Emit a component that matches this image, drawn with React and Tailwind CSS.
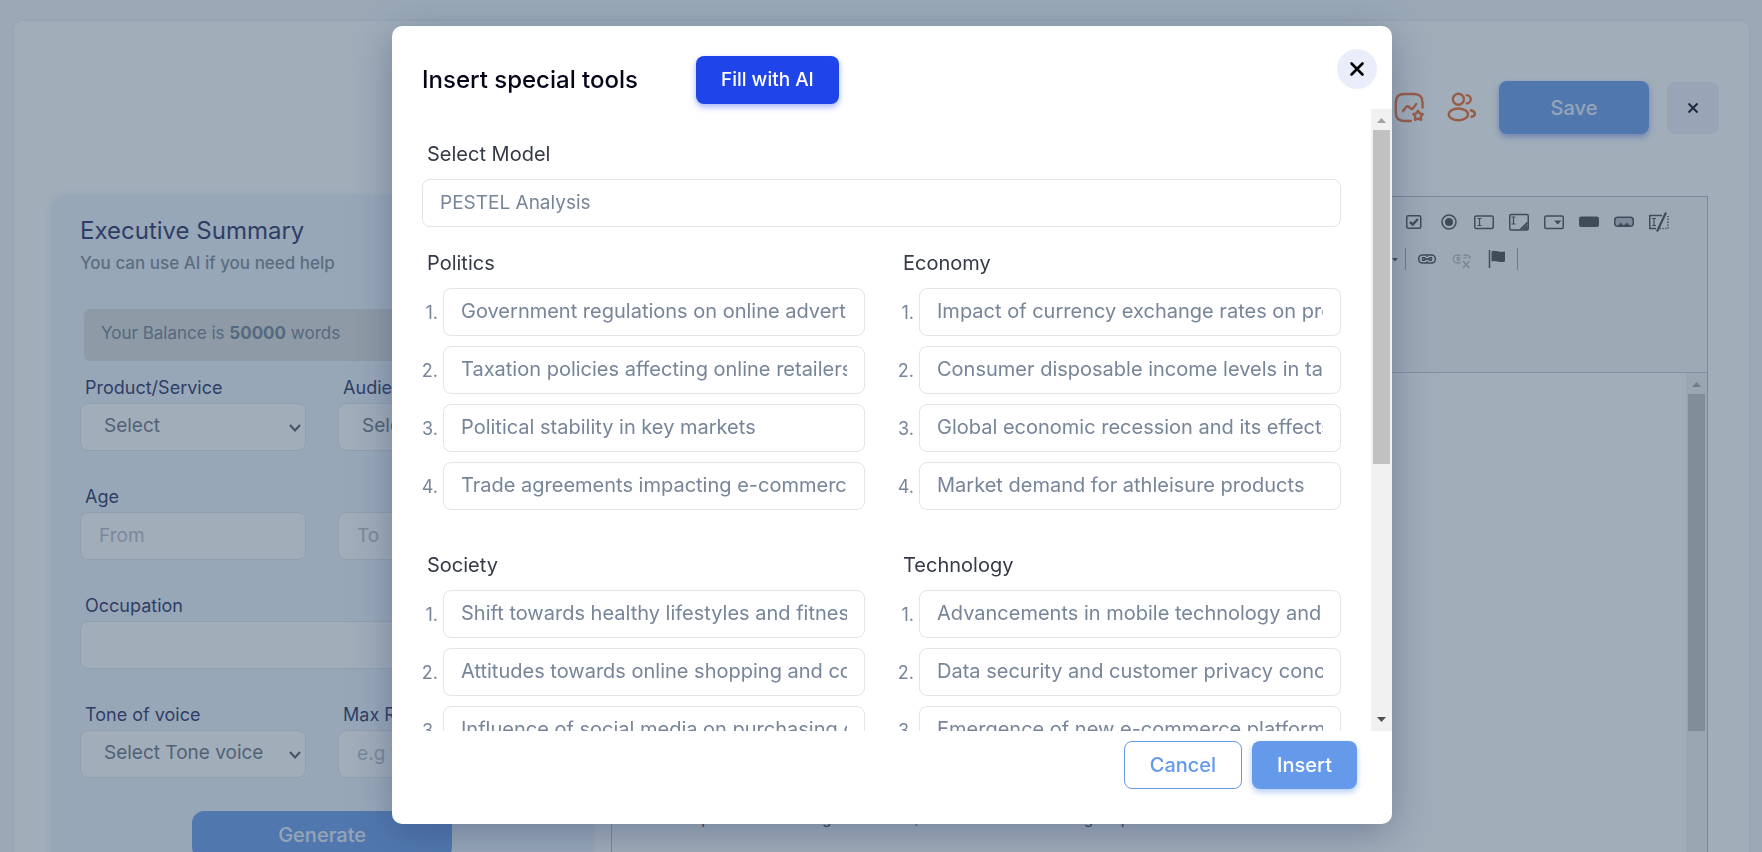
import { useId } from 'react';

const sections = [
  {
    title: 'Politics',
    items: [
      'Government regulations on online advertising',
      'Taxation policies affecting online retailers',
      'Political stability in key markets',
      'Trade agreements impacting e-commerce',
    ],
  },
  {
    title: 'Economy',
    items: [
      'Impact of currency exchange rates on profits',
      'Consumer disposable income levels in target markets',
      'Global economic recession and its effects on sales',
      'Market demand for athleisure products',
    ],
  },
  {
    title: 'Society',
    items: [
      'Shift towards healthy lifestyles and fitness',
      'Attitudes towards online shopping and convenience',
      'Influence of social media on purchasing decisions',
      'Changing demographics of shoppers',
    ],
  },
  {
    title: 'Technology',
    items: [
      'Advancements in mobile technology and apps',
      'Data security and customer privacy concerns',
      'Emergence of new e-commerce platforms',
      'Automation in logistics',
    ],
  },
];

const fieldBase =
  'block h-12 w-full min-w-0 rounded-lg border border-[#e2e4e8] bg-white pb-0.5 leading-6 outline-none';

function TextField({ label, name, placeholder }) {
  const id = useId();
  return (
    <div>
      <label htmlFor={id} className="block h-[30px] pl-[5px] text-[18px] leading-[30px] text-[#252a5e]">
        {label}
      </label>
      <input
        id={id}
        type="text"
        aria-label={name}
        placeholder={placeholder}
        className={`${fieldBase} px-[18px] text-[19px] placeholder:text-[#b4bac4]`}
      />
    </div>
  );
}

function SelectField({ label, option }) {
  const id = useId();
  return (
    <div>
      <label htmlFor={id} className="block h-[30px] pl-[5px] text-[18px] leading-[30px] text-[#252a5e]">
        {label}
      </label>
      <div className="relative">
        <select id={id} className={`${fieldBase} appearance-none pr-7 pl-[23px] text-[19px] text-[#66707f]`}>
          <option>{option}</option>
        </select>
        <svg className="pointer-events-none absolute top-[19px] right-[5px] size-3" viewBox="0 0 12 12" fill="none" stroke="#4a4f5c" strokeWidth="2">
          <path d="M1 3l5 5.5L11 3" />
        </svg>
      </div>
    </div>
  );
}

function ChartStarIcon() {
  return (
    <svg className="size-[33px]" viewBox="0 0 24 24" fill="none" stroke="#ee6526" strokeWidth="1.7" strokeLinecap="round" strokeLinejoin="round">
      <path d="M21.500 12V8.500c0-4.200-2-6.300-6.200-6.300H8.300C4.100 2.200 2 4.300 2 8.500v7c0 4.200 2.100 6.300 6.300 6.300h4.700" />
      <path d="M7.300 14.600l2.400-3.100c.4-.5 1-.6 1.500-.2l1.900 1.500c.5.4 1.100.3 1.500-.2l2.300-3.100" />
      <path d="M18.200 14.300l1.200 2 2.300.5-1.500 1.800.2 2.400-2.200-.9-2.200.9.2-2.400-1.500-1.800 2.300-.5z" />
    </svg>
  );
}

function UsersIcon() {
  return (
    <svg className="size-[33px]" viewBox="0 0 24 24" fill="none" stroke="#ee6526" strokeWidth="1.7" strokeLinecap="round">
      <circle cx="9" cy="6" r="4" />
      <path d="M15 9a3 3 0 0 0 0-6" />
      <ellipse cx="9" cy="17" rx="7" ry="4.300" />
      <path d="M18 14c1.754.385 3 1.359 3 2.500 0 1.029-1.014 1.923-2.500 2.370" />
    </svg>
  );
}

const ibeam = (x, y) => `M${x} ${y}h4M${x + 2} ${y}v7M${x} ${y + 7}h4`;

const toolbarTop = [
  {
    name: 'Checkbox',
    art: (
      <>
        <rect x="2.750" y="3.750" width="14" height="12.500" rx="1.500" />
        <path d="M6 10l2.800 2.600L13.800 7" strokeWidth="2.400" />
      </>
    ),
  },
  {
    name: 'Radio Button',
    art: (
      <>
        <circle cx="10" cy="10" r="7" />
        <circle cx="10" cy="10" r="4" fill="#464646" stroke="none" />
      </>
    ),
  },
  {
    name: 'Text Field',
    art: (
      <>
        <rect x=".75" y="4" width="18.500" height="12.500" rx="1.500" />
        <path d={ibeam(3.5, 6.5)} strokeWidth="1.200" />
      </>
    ),
  },
  {
    name: 'Textarea',
    art: (
      <>
        <rect x=".75" y="2.500" width="18.500" height="15.500" rx="1.500" />
        <path d={ibeam(2.5, 5)} strokeWidth="1.200" />
        <path d="M18.500 10.500l-7 7M18.500 13.500l-4 4M18.500 16l-1.500 1.500" strokeWidth="1.800" />
      </>
    ),
  },
  {
    name: 'Selection Field',
    art: (
      <>
        <rect x=".75" y="4" width="18.500" height="12.500" rx="1.500" />
        <path d="M10 8.500h7.500L13.750 12.500z" fill="#464646" stroke="none" />
      </>
    ),
  },
  {
    name: 'Button',
    art: <rect x=".75" y="5.250" width="18.500" height="9" rx="1.500" fill="#464646" />,
  },
  {
    name: 'Image Button',
    art: (
      <>
        <rect x=".75" y="5.250" width="18.500" height="9" rx="3" fill="#b9bdc3" />
        <path d="M3.500 14.500l3.200-4 3 3.300 3.200-3.300 3.600 4z" fill="#464646" stroke="none" />
      </>
    ),
  },
  {
    name: 'Hidden Field',
    art: (
      <>
        <path d="M13 3.500H.75v13H7" />
        <path d="M19 4v12.500h-9" strokeDasharray="1.300 1.500" />
        <path d={ibeam(3, 6.5)} strokeWidth="1.200" />
        <path d="M17 .5L8 19.500" strokeWidth="2.200" />
      </>
    ),
  },
];

const toolbarLinks = [
  {
    name: 'Link',
    art: (
      <>
        <rect x="1.750" y="6" width="16.500" height="8" rx="3.500" />
        <path d="M8.200 8.750H5.500v2.500h2.700M11.800 8.750h2.700v2.500h-2.700M10 6v2M10 12v2" strokeWidth="1.300" />
        <path d="M7 10h6" strokeWidth="1.800" />
      </>
    ),
  },
  {
    name: 'Unlink',
    faded: true,
    art: (
      <>
        <path d="M8.500 6.250H5a3.500 3.500 0 0 0 0 7.500h3.500M11.500 6.250H15a3.500 3.500 0 0 1 3 3.500M8.500 8.750h-3v2.500h3M11.500 8.750h3" strokeWidth="1.400" />
        <path d="M11 12l6.500 7M17.500 12L11 19" strokeWidth="1.800" />
      </>
    ),
  },
  {
    name: 'Anchor',
    art: (
      <>
        <path d="M2.500 1v18" strokeWidth="1.500" />
        <path d="M4.500 2.500c4-2.500 6.500 1.500 13.500 0v10c-6 2-9-2-13.500 0z" fill="#464646" stroke="none" />
      </>
    ),
  },
];

function ToolButton({ tool }) {
  return (
    <button type="button" aria-label={tool.name} className={tool.faded ? 'opacity-35' : ''}>
      <svg className="block size-5" viewBox="0 0 20 20" fill="none" stroke="#464646" strokeWidth="1.500">
        {tool.art}
      </svg>
    </button>
  );
}

function ScrollRail({ thumb, endColor }) {
  return (
    <div aria-hidden="true" className="flex w-[21px] flex-none flex-col bg-[#f1f1f1]">
      <svg className="h-[21px] w-full flex-none" viewBox="0 0 21 21">
        <path d="M6 14l4.500-5 4.500 5z" fill="#a3a3a3" />
      </svg>
      <div className={`mx-[2px] bg-[#c1c1c1] ${thumb}`} />
      <svg className="mt-auto h-[21px] w-full flex-none" viewBox="0 0 21 21">
        <path d="M6 7l4.500 5L15 7z" fill={endColor} />
      </svg>
    </div>
  );
}

function AssistantPanel() {
  return (
    <section className="mt-0.5 rounded-xl bg-[#eef4fd] px-7 pt-[18px] pb-10 shadow-[0_0_6px_rgba(160,195,235,0.35)]">
      <h1 className="text-[24px] leading-[34px] text-[#252a5e]">Executive Summary</h1>
      <p className="text-[17px] leading-[30px] font-medium text-[#7c8494]">You can use AI if you need help</p>
      <p className="mt-[31px] ml-1 h-[52px] rounded-md bg-[#dbdbd9] px-[17px] text-[17px] leading-[48px] text-[#6d7d92]">
        Your Balance is <strong className="font-bold">50000</strong> words
      </p>
      <div className="mt-3 grid grid-cols-2 gap-x-8 gap-y-[31px]">
        <SelectField label="Product/Service" option="Select" />
        <SelectField label="Audience" option="Select" />
        <TextField label="Age" name="Age from" placeholder="From" />
        <TextField label="" name="Age to" placeholder="To" />
        <div className="col-span-2">
          <TextField label="Occupation" name="Occupation" placeholder="" />
        </div>
        <SelectField label="Tone of voice" option="Select Tone voice" />
        <TextField label="Max Results" name="Max Results" placeholder="e.g 1" />
      </div>
      <button type="button" className="mx-auto mt-[33px] block h-12 w-[260px] rounded-xl bg-[#659aea] text-[20px] font-medium text-[#e8eefa]">
        Generate
      </button>
    </section>
  );
}

function Editor() {
  return (
    <section className="mt-0.5 flex flex-col border border-[#b4b9c2]">
      <div role="toolbar" aria-label="Editor tools" className="h-[176px] flex-none border-b border-[#c4c7cd] bg-[#f8f8f8] pt-[15px]">
        <div className="flex justify-end gap-[15px] pr-[38px]">
          {toolbarTop.map((tool) => (
            <ToolButton key={tool.name} tool={tool} />
          ))}
        </div>
        <div className="mt-4 flex items-center justify-end gap-[15px] pr-[189px]">
          <svg className="-mr-2 h-[5px] w-[6px]" viewBox="0 0 6 5">
            <path d="M0 1h6L3 4.500z" fill="#464646" />
          </svg>
          <span className="-mr-1 h-[22px] w-px bg-[#9a9fa8]" />
          {toolbarLinks.map((tool) => (
            <ToolButton key={tool.name} tool={tool} />
          ))}
          <span className="-ml-[5px] h-[22px] w-px bg-[#9a9fa8]" />
        </div>
      </div>
      <div className="flex min-h-0 flex-1 bg-white">
        <div className="flex-1 px-5 pt-[432px] font-['Liberation_Sans',sans-serif] text-[17px] leading-7 text-[#444]">
          <p>Our new platform makes growth clear, and it lets customers gain products in the store.</p>
        </div>
        <ScrollRail thumb="h-[337px]" endColor="#a3a3a3" />
      </div>
    </section>
  );
}

function PestelSection({ section }) {
  return (
    <section className="min-w-0">
      <h3 className="pl-[5px] text-[20px] leading-[30px] text-[#343a46]">{section.title}</h3>
      <ol className="mt-[10px] flex flex-col gap-[10px]">
        {section.items.map((item, i) => (
          <li key={item} className="flex items-center gap-[5px]">
            <span className="flex w-4 flex-none justify-end text-[18px]">{i + 1}.</span>
            <input
              type="text"
              aria-label={`${section.title} ${i + 1}`}
              defaultValue={item}
              className={`${fieldBase} flex-1 px-[17px] text-[20px]`}
            />
          </li>
        ))}
      </ol>
    </section>
  );
}

function InsertDialog() {
  return (
    <div
      role="dialog"
      aria-modal="true"
      aria-labelledby="dialog-title"
      className="relative flex max-h-[calc(100vh-54px)] w-full max-w-[1000px] flex-col rounded-[10px] bg-white text-[#778599] shadow-[0_8px_40px_rgba(40,55,100,0.38)]"
    >
      <header className="flex flex-none items-center gap-[58px] pt-[30px] pb-[5px] pl-[30px]">
        <h2 id="dialog-title" className="text-[24px] font-medium text-[#05051a]">
          Insert special tools
        </h2>
        <button type="button" className="h-12 rounded-lg bg-[#1f45ea] px-[25px] text-[19px] font-medium text-white shadow-[0_3px_6px_rgba(31,69,234,0.4)]">
          Fill with AI
        </button>
      </header>
      <button type="button" aria-label="Close" className="absolute top-[23px] right-[15px] grid size-10 place-items-center rounded-full bg-[#eaeefa]">
        <svg className="size-4" viewBox="0 0 16 16" fill="none" stroke="#000" strokeWidth="2.600" strokeLinecap="round">
          <path d="M2.500 2.500l11 11M13.500 2.500l-11 11" />
        </svg>
      </button>
      <div className="flex min-h-0 flex-1">
        <div className="min-w-0 flex-1 overflow-y-auto px-[30px] pt-[30px] [scrollbar-width:none]">
          <label htmlFor="model" className="block pl-[5px] text-[20px] leading-[30px] text-[#343a46]">
            Select Model
          </label>
          <input id="model" type="text" defaultValue="PESTEL Analysis" className={`${fieldBase} mt-[10px] px-[17px] text-[19px]`} />
          <div className="mt-[21px] grid grid-cols-2 gap-x-[33px] gap-y-10 pb-10">
            {sections.map((section) => (
              <PestelSection key={section.title} section={section} />
            ))}
          </div>
        </div>
        <ScrollRail thumb="h-[334px]" endColor="#505050" />
      </div>
      <footer className="flex flex-none justify-end gap-[10px] pt-[10px] pr-[35px] pb-[35px]">
        <button type="button" className="h-12 rounded-lg border border-[#659aea] bg-white px-[25px] text-[20px] font-medium text-[#659aea]">
          Cancel
        </button>
        <button type="button" className="h-12 rounded-lg bg-[#659aea] px-[25px] text-[20px] font-medium text-white shadow-[0_3px_6px_rgba(101,154,234,0.5)]">
          Insert
        </button>
      </footer>
    </div>
  );
}

export default function App() {
  return (
    <div className="h-screen overflow-hidden bg-[#f4f8fb] font-['Inter',sans-serif]">
      <main className="mr-[13px] ml-[14px] mt-[21px] min-h-screen rounded-lg bg-white pr-[41px] pb-10 pl-[38px] shadow-[0_0_3px_rgba(150,180,215,0.3)]">
        <div className="-mr-[11px] flex items-center justify-end gap-5 pt-[60px] pb-[60px]">
          <button type="button" aria-label="Insert special tools">
            <ChartStarIcon />
          </button>
          <button type="button" aria-label="Collaborators">
            <UsersIcon />
          </button>
          <button type="button" className="h-[53px] w-[150px] rounded-lg bg-[#659aea] text-[20px] font-medium text-[#e8eefa] shadow-[0_3px_6px_rgba(90,120,240,0.6)]">
            Save
          </button>
          <button type="button" aria-label="Close editor" className="-ml-[2px] grid size-[52px] place-items-center rounded-lg bg-[#eceffa]">
            <svg className="size-3" viewBox="0 0 12 12" fill="none" stroke="#05051a" strokeWidth="2">
              <path d="M1.500 1.500l9 9M10.500 1.500l-9 9" />
            </svg>
          </button>
        </div>
        <div className="grid grid-cols-[33fr_67fr] gap-[19px]">
          <AssistantPanel />
          <Editor />
        </div>
      </main>
      <div className="fixed inset-0 flex items-start justify-center bg-[rgba(59,84,109,0.48)] pt-[26px] pl-[22px]">
        <InsertDialog />
      </div>
    </div>
  );
}
